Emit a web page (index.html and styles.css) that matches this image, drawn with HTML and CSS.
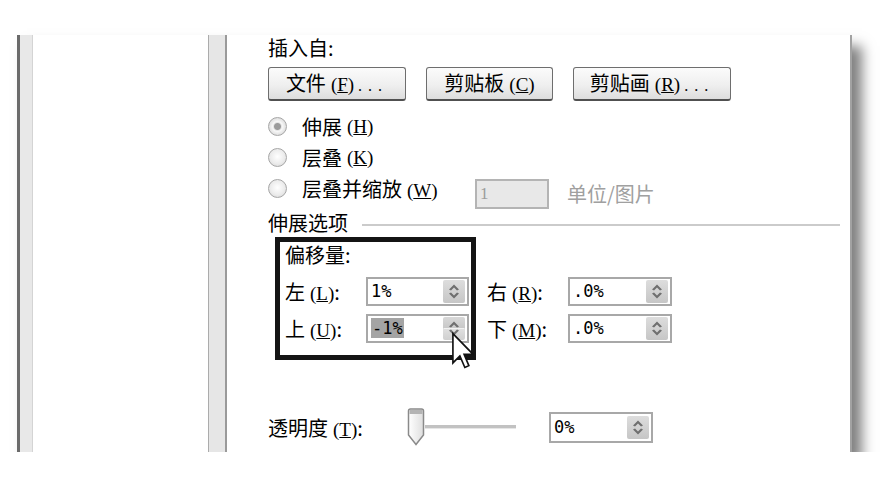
FILE: index.html
```html
<!DOCTYPE html>
<html lang="zh-CN">
<head>
    <meta charset="UTF-8">
    <meta name="viewport" content="width=device-width, initial-scale=1.0">
    <title>设置背景格式 - 填充</title>
    <link rel="stylesheet" href="styles.css">
</head>
<body>
    <div class="window">
        <!-- 左侧类别列表 -->
        <div class="nav">
            <div class="nav-strip"></div>
            <div class="nav-list"></div>
        </div>
        <div class="splitter"></div>

        <!-- 填充设置 -->
        <div class="pane">
            <div class="caption">插入自:</div>
            <div class="buttons">
                <button class="btn btn-file">文件<span class="key">(<u>F</u>)</span><span class="dots">...</span></button>
                <button class="btn btn-clip">剪贴板<span class="key">(<u>C</u>)</span></button>
                <button class="btn btn-art">剪贴画<span class="key">(<u>R</u>)</span><span class="dots">...</span></button>
            </div>

            <div class="radios">
                <div class="radio-row"><span class="radio checked"></span>伸展<span class="key">(<u>H</u>)</span></div>
                <div class="radio-row"><span class="radio"></span>层叠<span class="key">(<u>K</u>)</span></div>
                <div class="radio-row">
                    <span class="radio"></span><span class="radio-text">层叠并缩放<span class="key">(<u>W</u>)</span></span>
                    <span class="field-disabled">1</span>
                    <span class="unit">单位/图片</span>
                </div>
            </div>

            <div class="group-title"><span>伸展选项</span><span class="rule"></span></div>

            <div class="offsets">
                <div class="highlight">
                    <div class="sub-title">偏移量:</div>
                    <div class="offset-row">
                        <span class="field-label">左<span class="key">(<u>L</u>)</span>:</span>
                        <span class="spin"><span class="spin-value">1%</span><span class="spin-btn"><svg width="22" height="23" viewBox="0 0 22 23"><path d="M6 9.5 L11 4.5 L16 9.5 L14 10.5 L11 7.5 L8 10.5 Z M6 13.5 L11 18.5 L16 13.5 L14 12.5 L11 15.5 L8 12.5 Z" fill="#6f6f6f"/></svg></span></span>
                    </div>
                    <div class="offset-row">
                        <span class="field-label">上<span class="key">(<u>U</u>)</span>:</span>
                        <span class="spin"><span class="spin-value"><span class="selected">-1%</span></span><span class="spin-btn pressed"><svg width="22" height="23" viewBox="0 0 22 23"><path d="M6 9.5 L11 4.5 L16 9.5 L14 10.5 L11 7.5 L8 10.5 Z M6 13.5 L11 18.5 L16 13.5 L14 12.5 L11 15.5 L8 12.5 Z" fill="#6f6f6f"/><path d="M1 11.5 H21" stroke="#f2f2f2" stroke-width="1"/></svg></span></span>
                    </div>
                </div>
                <div class="offset-col">
                    <div class="offset-row">
                        <span class="field-label">右<span class="key">(<u>R</u>)</span>:</span>
                        <span class="spin"><span class="spin-value">.0%</span><span class="spin-btn"><svg width="22" height="23" viewBox="0 0 22 23"><path d="M6 9.5 L11 4.5 L16 9.5 L14 10.5 L11 7.5 L8 10.5 Z M6 13.5 L11 18.5 L16 13.5 L14 12.5 L11 15.5 L8 12.5 Z" fill="#6f6f6f"/></svg></span></span>
                    </div>
                    <div class="offset-row">
                        <span class="field-label">下<span class="key">(<u>M</u>)</span>:</span>
                        <span class="spin"><span class="spin-value">.0%</span><span class="spin-btn"><svg width="22" height="23" viewBox="0 0 22 23"><path d="M6 9.5 L11 4.5 L16 9.5 L14 10.5 L11 7.5 L8 10.5 Z M6 13.5 L11 18.5 L16 13.5 L14 12.5 L11 15.5 L8 12.5 Z" fill="#6f6f6f"/></svg></span></span>
                    </div>
                </div>
            </div>

            <div class="slider-row">
                <span class="slider-label">透明度<span class="key">(<u>T</u>)</span>:</span>
                <svg class="thumb" width="18" height="38" viewBox="0 0 18 38">
                    <defs>
                        <linearGradient id="thumbFill" x1="0" y1="0" x2="1" y2="0">
                            <stop offset="0" stop-color="#ffffff"/>
                            <stop offset="1" stop-color="#dedede"/>
                        </linearGradient>
                    </defs>
                    <path d="M1.5 3 Q1.5 1 3.5 1 H14.5 Q16.5 1 16.5 3 V27 L9 36.5 L1.5 27 Z" fill="url(#thumbFill)" stroke="#8a8a8a" stroke-width="1.5"/>
                    <path d="M2.5 2 H15.5 V6 H2.5 Z" fill="#b4b4b4"/>
                </svg>
                <span class="track"></span>
                <span class="spin spin-alpha"><span class="spin-value">0%</span><span class="spin-btn"><svg width="22" height="23" viewBox="0 0 22 23"><path d="M6 9.5 L11 4.5 L16 9.5 L14 10.5 L11 7.5 L8 10.5 Z M6 13.5 L11 18.5 L16 13.5 L14 12.5 L11 15.5 L8 12.5 Z" fill="#6f6f6f"/></svg></span></span>
            </div>
        </div>

        <!-- 鼠标指针 -->
        <svg class="cursor" width="22" height="38" viewBox="0 0 12 20">
            <path d="M0.5 0.5 V16.5 L4.3 12.7 L7 19 L9.2 18 L6.6 11.8 H11.5 Z" fill="#fff" stroke="#111" stroke-width="0.9" stroke-linejoin="miter"/>
        </svg>
    </div>
</body>
</html>
```

FILE: styles.css
```css
body { margin: 0; background: #fff; font-family: "Noto Sans CJK SC", sans-serif; font-size: 20px; color: #000; }

.window { position: relative; display: flex; width: 835px; height: 417px; margin: 35px 0 0 17px; background: #fff; box-shadow: 10px 11px 12px rgba(0, 0, 0, 0.5); }

/* left side */
.nav { display: flex; width: 191px; box-sizing: border-box; border-left: 3px solid #6b6b6b; }
.nav-strip { width: 12px; background: #e8e8e8; border-right: 1px solid #d4d4d4; }
.nav-list { flex: 1; background: #fff; }
.splitter { width: 19px; box-sizing: border-box; border-left: 1px solid #ababab; border-right: 2px solid #9a9a9a; background: #e6e6e6; }

/* fill pane */
.pane { flex: 1; border-right: 2px solid #a2a2a2; padding: 1px 0 0 41px; }
.caption { line-height: 24px; }
.key { font-family: "Liberation Serif", serif; font-size: 19px; margin-left: 5px; }

.buttons { display: flex; gap: 20px; margin-top: 7px; }
.btn { height: 34px; box-sizing: border-box; padding: 0; border: 1px solid #6e6e6e; border-bottom: 2px solid #505050; border-radius: 3px; background: linear-gradient(#fbfbfb, #efefef 55%, #dddddd); font: inherit; color: inherit; line-height: 30px; }
.btn-file { width: 138px; }
.btn-clip { width: 127px; }
.btn-art { width: 158px; }
.dots { font-family: "Liberation Serif", serif; font-size: 16px; letter-spacing: 6px; margin-left: 4px; }

.radios { margin-top: 10px; }
.radio-row { display: flex; align-items: center; height: 31px; }
.radio { width: 19px; height: 19px; box-sizing: border-box; margin-right: 15px; border: 1px solid #a6a6a6; border-radius: 50%; background: radial-gradient(circle at 50% 45%, #ffffff, #ececec 55%, #d2d2d2); }
.radio.checked { background: radial-gradient(circle, #9c9c9c 0 3px, #e6e6e6 4px, #f7f7f7 5px, #dcdcdc 9px); }
.radio-text { width: 173px; }
.field-disabled { width: 74px; height: 30px; box-sizing: border-box; margin-top: 10px; padding-left: 3px; border: 2px solid #b4b4b4; background: #e8e8e8; color: #9c9c9c; font-family: "Liberation Serif", serif; font-size: 17px; line-height: 26px; }
.unit { margin: 10px 0 0 18px; color: #a0a0a0; }

.group-title { display: flex; align-items: center; margin-top: 7px; line-height: 24px; }
.rule { flex: 1; height: 2px; margin: 3px 10px 0 14px; background: #cbcbcb; }

/* offsets */
.offsets { display: flex; margin: 2px 0 0 7px; }
.highlight { padding: 1px 2px 12px 5px; border: 5px solid #141414; }
.sub-title { line-height: 24px; }
.offset-row { display: flex; align-items: center; height: 30px; margin-top: 9px; }
.offset-row + .offset-row { margin-top: 7px; }
.offset-col { margin-left: 11px; padding-top: 30px; }
.field-label { width: 81px; }

.spin { display: flex; align-items: center; width: 103px; height: 29px; box-sizing: border-box; padding: 0 2px; border: 2px solid #a8a8a8; background: #fff; }
.offset-col .spin { width: 104px; }
.spin-value { flex: 1; padding-left: 1px; font-family: "DejaVu Sans Mono", monospace; font-size: 17px; line-height: 21px; }
.selected { background: #a4a4a4; padding: 0 1px; }
.spin-btn { width: 22px; height: 23px; border-radius: 2px; background: linear-gradient(#dddddd, #c6c6c6); }
.spin-btn svg { display: block; }
.spin-btn.pressed { background: linear-gradient(#d8d8d8, #c8c8c8 50%, #e0e0e0 50%, #d0d0d0); }

/* transparency */
.slider-row { display: flex; align-items: center; height: 38px; margin-top: 48px; }
.slider-label { width: 139px; }
.thumb { display: block; }
.track { width: 91px; height: 3px; border-bottom: 1px solid #e6e6e6; background: #c2c2c2; }
.spin-alpha { width: 104px; height: 31px; margin-left: 33px; }

.cursor { position: absolute; left: 435px; top: 297px; }
```
